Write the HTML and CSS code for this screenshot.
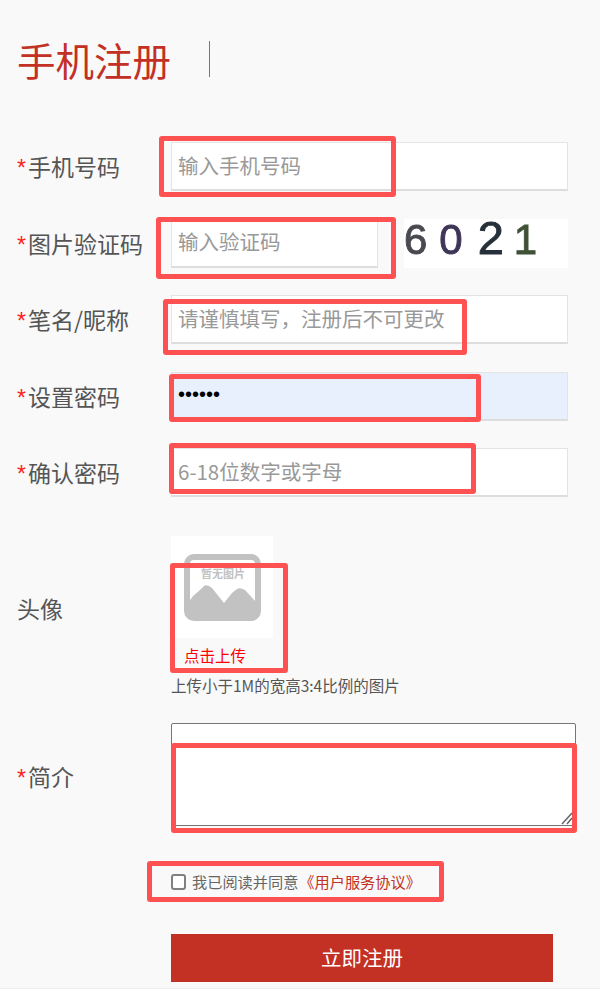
FILE: index.html
```html
<!DOCTYPE html>
<html lang="zh-CN">
<head>
    <meta charset="UTF-8">
    <meta name="viewport" content="width=device-width, initial-scale=1.0">
    <title>手机注册</title>
    <link rel="stylesheet" href="styles.css">
</head>
<body>
    <div class="page">
        <div class="title-bar">
            <h1>手机注册</h1>
            <span class="title-line"></span>
        </div>

        <form class="reg-form">
            <div class="row">
                <label class="label"><i>*</i>手机号码</label>
                <input class="field" type="text" placeholder="输入手机号码">
            </div>
            <div class="row">
                <label class="label"><i>*</i>图片验证码</label>
                <input class="field short" type="text" placeholder="输入验证码">
                <div class="captcha">
                    <span class="d1">6</span><span class="d2">0</span><span class="d3">2</span><span class="d4">1</span>
                </div>
            </div>
            <div class="row">
                <label class="label"><i>*</i>笔名/昵称</label>
                <input class="field" type="text" placeholder="请谨慎填写，注册后不可更改">
            </div>
            <div class="row">
                <label class="label"><i>*</i>设置密码</label>
                <input class="field filled" type="password" value="123456">
            </div>
            <div class="row">
                <label class="label"><i>*</i>确认密码</label>
                <input class="field" type="password" placeholder="6-18位数字或字母">
            </div>

            <div class="row avatar-row">
                <label class="label">头像</label>
                <div class="avatar-col">
                    <div class="avatar">
                        <svg width="102" height="102" viewBox="0 0 102 102">
                            <rect x="16" y="21" width="71" height="61" rx="7" fill="none" stroke="#c2c2c2" stroke-width="6"/>
                            <path d="M17 67 L22 60 L29 54 L33 50 Q36 48 41 52 L53 67 L61 57 L66 53 Q69 51 74 54 L86 67 L86 80 Q86 84 80 84 L23 84 Q17 84 17 80 Z" fill="#c2c2c2"/>
                            <text x="52" y="42" text-anchor="middle" class="no-pic">暂无图片</text>
                        </svg>
                    </div>
                    <a class="upload" href="#">点击上传</a>
                    <p class="hint">上传小于1M的宽高3:4比例的图片</p>
                </div>
            </div>

            <div class="row intro-row">
                <label class="label"><i>*</i>简介</label>
                <textarea class="intro"></textarea>
            </div>

            <div class="agree">
                <input class="check" type="checkbox">
                <span>我已阅读并同意</span>
                <a href="#">《用户服务协议》</a>
            </div>

            <button class="submit" type="button">立即注册</button>
        </form>

        <!-- red marks drawn over the screenshot -->
        <div class="mark m-phone"></div>
        <div class="mark m-code"></div>
        <div class="mark m-name"></div>
        <div class="mark m-pass"></div>
        <div class="mark m-confirm"></div>
        <div class="mark m-avatar"></div>
        <div class="mark m-intro"></div>
        <div class="mark m-agree"></div>

        <svg class="grip" width="12" height="13" viewBox="0 0 12 13">
            <path d="M1 12 L11 1 M6 12 L11 6" fill="none" stroke="#666" stroke-width="1.5"/>
        </svg>
    </div>
</body>
</html>
```

FILE: styles.css
```css
* {
    box-sizing: border-box;
}

body {
    margin: 0;
    background-color: #fff;
    font-family: "Noto Sans CJK SC", "Liberation Sans", sans-serif;
    color: #555;
}

.page {
    position: relative;
    height: 989px;
    padding-left: 17px;
    background-color: #f9f9f9;
    border-bottom: 1px solid #eee;
}

.title-bar {
    display: flex;
    align-items: center;
    height: 142px;
    padding-bottom: 24px;
}

h1 {
    margin: 0;
    width: 192px;
    font-size: 38.5px;
    font-weight: 400;
    line-height: 44px;
    color: #c33024;
}

.title-line {
    width: 1px;
    height: 36px;
    background-color: #777;
}

.reg-form {
    display: flex;
    flex-direction: column;
}

.row {
    display: flex;
    align-items: center;
    height: 49px;
    margin-bottom: 27.5px;
}

.label {
    width: 154px;
    padding-top: 1px;
    font-size: 23px;
    line-height: 30px;
    white-space: nowrap;
}

.label i {
    margin-right: 2px;
    font-style: normal;
    font-family: "Liberation Sans", sans-serif;
    color: #f22;
}

.field {
    width: 397px;
    height: 49px;
    padding: 0 6px 3px;
    border: 1px solid #e4e4e4;
    border-bottom: 2px solid #ddd;
    background-color: #fff;
    font-family: inherit;
    font-size: 20.5px;
    color: #000;
    outline: none;
}

.field::placeholder {
    color: #999;
}

.field.short {
    width: 207px;
}

.field.filled {
    background-color: #e8f0fe;
    font-family: "Liberation Sans", sans-serif;
    font-size: 20px;
}

.captcha {
    display: flex;
    align-items: baseline;
    width: 164px;
    height: 49px;
    margin-left: 26px;
    background-color: #fff;
    font-family: "Liberation Sans", sans-serif;
    font-size: 42px;
    line-height: 38px;
    -webkit-text-stroke: 0.9px;
    filter: blur(0.6px);
}

.d1 { color: #484a50; margin-right: 12px; }
.d2 { color: #3f3556; margin-right: 15px; }
.d3 { color: #26303a; margin-right: 10px; font-size: 47px; }
.d4 { color: #3f5237; }

.avatar-row {
    height: auto;
    margin-top: 11px;
    margin-bottom: 28px;
}

.avatar-row .label {
    margin-top: -16px;
}

.avatar-col {
    display: flex;
    flex-direction: column;
}

.avatar {
    width: 102px;
    height: 102px;
    background-color: #fff;
}

.avatar svg {
    display: block;
}

.no-pic {
    font-size: 11px;
    font-weight: 700;
    fill: #c2c2c2;
}

.upload {
    margin: 6px 0 0 13px;
    font-size: 15.5px;
    line-height: 22px;
    color: #f00;
    text-decoration: none;
}

.hint {
    margin: 9px 0 0;
    font-size: 15.5px;
    line-height: 20px;
    color: #555;
}

.intro-row {
    height: 103px;
    margin-bottom: 0;
}

.intro-row .label {
    padding-top: 5px;
}

.intro {
    width: 405px;
    height: 103px;
    border: 1px solid #767676;
    border-radius: 2px;
    background-color: #fff;
    outline: none;
    resize: none;
}

.agree {
    display: flex;
    align-items: center;
    height: 24px;
    margin-top: 43px;
    margin-left: 154px;
    font-size: 15.2px;
    color: #666;
}

.check {
    appearance: none;
    width: 15px;
    height: 16px;
    margin: 2px 6px 0 0;
    border: 2px solid #808080;
    border-radius: 3px;
    background-color: #fff;
}

.agree a {
    margin-left: 1px;
    color: #c33024;
    text-decoration: none;
}

.submit {
    width: 382px;
    height: 48px;
    margin-top: 41px;
    margin-left: 154px;
    padding-bottom: 3px;
    border: none;
    background-color: #c33024;
    font-family: inherit;
    font-size: 20.5px;
    color: #fff;
}

.mark {
    position: absolute;
    border: 5px solid #fe5252;
    border-radius: 3px;
    pointer-events: none;
}

.m-phone { left: 159px; top: 136px; width: 237px; height: 61px; }
.m-code { left: 156px; top: 217px; width: 240px; height: 62px; }
.m-name { left: 163px; top: 299px; width: 304px; height: 56px; }
.m-pass { left: 169px; top: 374px; width: 312px; height: 48px; }
.m-confirm { left: 169px; top: 443px; width: 307px; height: 51px; }
.m-avatar { left: 170px; top: 563px; width: 118px; height: 110px; }
.m-intro { left: 171px; top: 743px; width: 406px; height: 90px; }
.m-agree { left: 147px; top: 861px; width: 297px; height: 41px; }

.grip {
    position: absolute;
    left: 561px;
    top: 812px;
}
```
